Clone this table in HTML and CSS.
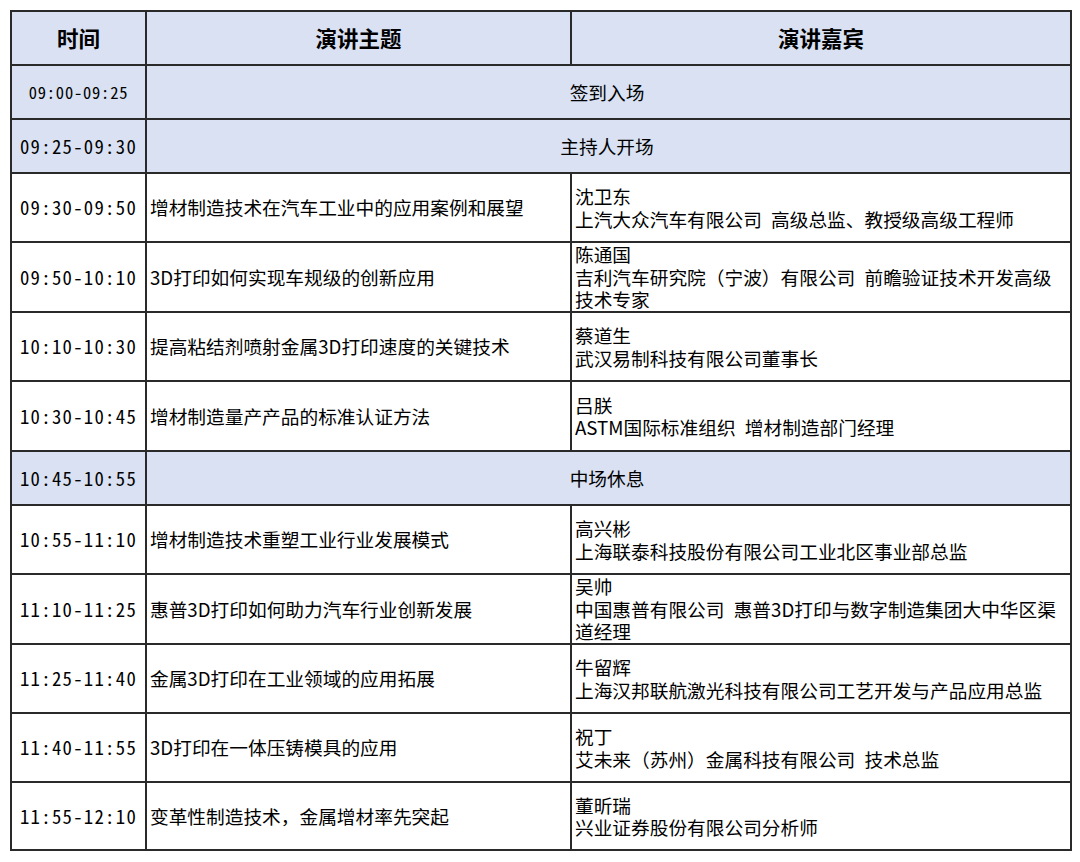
FILE: index.html
```html
<!DOCTYPE html>
<html lang="zh-CN">
<head>
<meta charset="utf-8">
<title>议程</title>
<link rel="stylesheet" href="styles.css">
</head>
<body>
<table class="agenda">
  <colgroup>
    <col class="c-time">
    <col class="c-topic">
    <col class="c-guest">
  </colgroup>
  <thead>
    <tr class="row-short head">
      <th>时间</th>
      <th>演讲主题</th>
      <th>演讲嘉宾</th>
    </tr>
  </thead>
  <tbody>
    <tr class="row-short fill">
      <td class="time time-sm">09:00-09:25</td>
      <td class="merged" colspan="2">签到入场</td>
    </tr>
    <tr class="row-short fill">
      <td class="time">09:25-09:30</td>
      <td class="merged" colspan="2">主持人开场</td>
    </tr>
    <tr class="row-69">
      <td class="time">09:30-09:50</td>
      <td class="topic">增材制造技术在汽车工业中的应用案例和展望</td>
      <td class="guest"><div>沈卫东</div><div>上汽大众汽车有限公司 高级总监、教授级高级工程师</div></td>
    </tr>
    <tr class="row-70">
      <td class="time">09:50-10:10</td>
      <td class="topic">3D打印如何实现车规级的创新应用</td>
      <td class="guest"><div>陈通国</div><div>吉利汽车研究院（宁波）有限公司 前瞻验证技术开发高级技术专家</div></td>
    </tr>
    <tr class="row-69">
      <td class="time">10:10-10:30</td>
      <td class="topic">提高粘结剂喷射金属3D打印速度的关键技术</td>
      <td class="guest"><div>蔡道生</div><div>武汉易制科技有限公司董事长</div></td>
    </tr>
    <tr class="row-70">
      <td class="time">10:30-10:45</td>
      <td class="topic">增材制造量产产品的标准认证方法</td>
      <td class="guest"><div>吕朕</div><div>ASTM国际标准组织 增材制造部门经理</div></td>
    </tr>
    <tr class="row-short fill">
      <td class="time">10:45-10:55</td>
      <td class="merged" colspan="2">中场休息</td>
    </tr>
    <tr class="row-69">
      <td class="time">10:55-11:10</td>
      <td class="topic">增材制造技术重塑工业行业发展模式</td>
      <td class="guest"><div>高兴彬</div><div>上海联泰科技股份有限公司工业北区事业部总监</div></td>
    </tr>
    <tr class="row-70">
      <td class="time">11:10-11:25</td>
      <td class="topic">惠普3D打印如何助力汽车行业创新发展</td>
      <td class="guest"><div>吴帅</div><div>中国惠普有限公司 惠普3D打印与数字制造集团大中华区渠道经理</div></td>
    </tr>
    <tr class="row-69">
      <td class="time">11:25-11:40</td>
      <td class="topic">金属3D打印在工业领域的应用拓展</td>
      <td class="guest"><div>牛留辉</div><div>上海汉邦联航激光科技有限公司工艺开发与产品应用总监</div></td>
    </tr>
    <tr class="row-69">
      <td class="time">11:40-11:55</td>
      <td class="topic">3D打印在一体压铸模具的应用</td>
      <td class="guest"><div>祝丁</div><div>艾未来（苏州）金属科技有限公司 技术总监</div></td>
    </tr>
    <tr class="row-68">
      <td class="time">11:55-12:10</td>
      <td class="topic">变革性制造技术，金属增材率先突起</td>
      <td class="guest"><div>董昕瑞</div><div>兴业证券股份有限公司分析师</div></td>
    </tr>
  </tbody>
</table>
</body>
</html>
```
FILE: styles.css
```css
html, body {
  margin: 0;
  padding: 0;
  background: #ffffff;
}

body {
  padding: 10px 0 0 10px;
  font-family: "Noto Sans CJK SC", "Noto Sans", sans-serif;
  color: #000;
}

.agenda {
  border-collapse: collapse;
  table-layout: fixed;
  width: 1060px;
  font-size: 18.7px;
  line-height: 22.5px;
}

.c-time { width: 135px; }
.c-topic { width: 425px; }
.c-guest { width: 500px; }

.agenda th,
.agenda td {
  border: 2px solid #2a2a2a;
  padding: 0 6px 0 3px;
  vertical-align: middle;
}

.row-short { height: 54px; }
.row-68 { height: 68px; }
.row-69 { height: 69px; }
.row-70 { height: 70px; }

.head th {
  background: #d9e1f2;
  font-weight: bold;
  font-size: 21.5px;
  text-align: center;
  padding: 0;
}

.fill td {
  background: #d9e1f2;
}

.time {
  text-align: center;
  font-family: "Noto Sans Mono CJK SC", "Noto Sans CJK SC", sans-serif;
  letter-spacing: 1.3px;
  white-space: nowrap;
  padding: 0 !important;
}

.time-sm {
  font-size: 16.5px;
  letter-spacing: 0.8px;
}

.merged {
  text-align: center;
}

.topic {
  text-align: left;
}

.guest {
  text-align: left;
  word-spacing: 5px;
}
```
